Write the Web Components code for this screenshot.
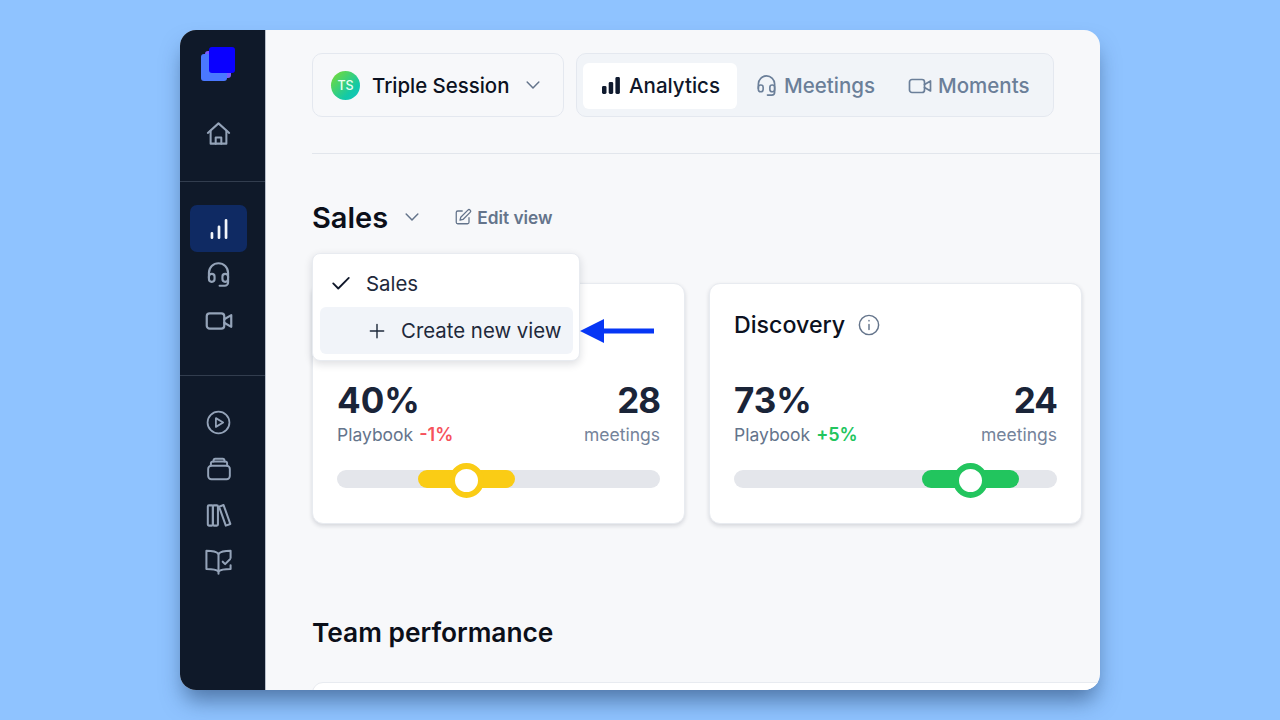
<!DOCTYPE html>
<html><head><meta charset="utf-8"><title>Analytics</title>
<style>
html,body{margin:0;padding:0;height:720px;overflow:hidden}
body{background:#8fc3ff;font-family:Inter,"Noto Sans",sans-serif;padding:30px 180px;box-sizing:border-box}
</style></head><body>
<app-window>
  <side-bar slot="side"></side-bar>
  <top-bar></top-bar>
  <view-header></view-header>
  <score-cards></score-cards>
  <team-section></team-section>
</app-window>
<script>
const I={
 home:'<path d="M2.500 11.500 12 3l9.500 8.500"/><path d="M5 9.500V21h14V9.500"/><path d="M9.500 21v-5.500h5V21"/>',
 bars:'<path d="M5.500 20v-4M12 20V10M18.500 20V4"/>',
 head:'<path d="M3.500 15v-4.500a8.500 8.500 0 0 1 17 0V15"/><rect x="3.500" y="11.500" width="5" height="7" rx="2.400"/><rect x="15.500" y="11.500" width="5" height="7" rx="2.400"/><path d="M20.500 16v3a3 3 0 0 1-3 3H13"/>',
 video:'<rect x="1.500" y="5.500" width="15" height="13" rx="2.500"/><path d="m16.500 10.500 6-3.500v10l-6-3.500"/>',
 play:'<circle cx="12" cy="12" r="10.500"/><path d="M9.500 7.800v8.400l7-4.200z"/>',
 box:'<rect x="2" y="9" width="20" height="12.500" rx="3"/><path d="M4.500 9V7a2 2 0 0 1 2-2h11a2 2 0 0 1 2 2v2"/><path d="M7 5V4A1.500 1.500 0 0 1 8.500 2.500h7A1.500 1.500 0 0 1 17 4v1"/>',
 lib:'<rect x="2.500" y="3" width="4.500" height="18" rx="1"/><rect x="7" y="3" width="4.500" height="18" rx="1"/><path d="m12.500 4.200 4-1.500 6 16.800-4 1.500z"/>',
 book:'<path d="M12 6.500C10.500 4.800 8 4 2 4v15c6 0 8.500.6 10 2 1.500-1.400 4-2 10-2v-3"/><path d="M12 6.500C13.500 4.800 16 4 22 4v6"/><path d="M12 6.500V23"/><path d="m15.500 13 2 2 4-4"/>',
 chev:'<path d="m5 8.500 7 7 7-7"/>',
 edit:'<path d="M11 4H5a2 2 0 0 0-2 2v13a2 2 0 0 0 2 2h13a2 2 0 0 0 2-2v-6"/><path d="M18.500 2.800a2.100 2.100 0 0 1 3 3L12 15.300l-4 1 1-4z"/>',
 check:'<path d="m3.500 12.500 5.500 5.500L20.500 6.500"/>',
 plus:'<path d="M12 4v16M4 12h16"/>',
 info:'<circle cx="12" cy="12" r="10.500"/><path d="M12 11.500v5.500M12 7.200v.3"/>'
};
const svg=(n,s,w=1.6,c='currentColor')=>`<svg width="${s}" height="${s}" viewBox="0 0 24 24" fill="none" stroke="${c}" stroke-width="${w}" stroke-linecap="round" stroke-linejoin="round" aria-hidden="true">${I[n]}</svg>`;
function def(tag,html,init){customElements.define(tag,class extends HTMLElement{
  connectedCallback(){ if(this.shadowRoot)return; const r=this.attachShadow({mode:'open'}); r.innerHTML=typeof html==='function'?html(this):html; init&&init(r,this);}
});}

def('app-window',`<style>
:host{display:flex;width:920px;height:660px;border-radius:16px;overflow:hidden;background:#f7f8fa;box-shadow:0 14px 22px -4px rgba(24,52,92,.55)}
main{flex:1;min-width:0;padding:23px 0 0 46px;box-sizing:border-box;display:flex;flex-direction:column}
</style><slot name="side"></slot><main><slot></slot></main>`);

def('side-bar',`<style>
:host{display:flex;flex-direction:column;flex:none;width:86px;box-sizing:border-box;background:#0f1929;border-right:1px solid #b9c0cb;padding-top:17px;color:#94a3b8}
.logo{position:relative;width:34px;height:34px;margin:0 0 30px 21px}
.logo i{position:absolute;display:block;border-radius:3px}
.a{left:0;top:7px;width:26px;height:27px;background:#4a78ff}
.b{left:4px;top:4px;width:26px;height:27px;background:#7a5cff}
.c{left:8px;top:0;width:26px;height:26px;background:#0a00ff}
.it{height:46px;display:flex;align-items:center;justify-content:center;margin:0 18px 0 10px;border-radius:7px}
.it.on{background:#0f2a63;color:#f2f5fa;height:47px;margin-bottom:-1px}
.hr{height:1px;background:#323d4e;flex:none}
.h1{margin:24px 0 23px}.h2{margin:32px 0 24px}
.up,.dn{display:flex;position:relative}.up{top:-1px}.dn{top:1px}
</style>
<div class="logo"><i class="b"></i><i class="a"></i><i class="c"></i></div>
<div class="it"><span class="up">${svg('home',27,1.8)}</span></div>
<div class="hr h1"></div>
<div class="it on">${svg('bars',26,2.5)}</div>
<div class="it">${svg('head',27,1.9)}</div>
<div class="it"><span class="dn">${svg('video',28,1.9)}</span></div>
<div class="hr h2"></div>
<div class="it"><span class="up">${svg('play',25,1.7)}</span></div>
<div class="it">${svg('box',26,1.8)}</div>
<div class="it">${svg('lib',27,1.8)}</div>
<div class="it"><span class="up">${svg('book',29,1.7)}</span></div>`);

def('top-bar',`<style>
:host{display:flex;gap:12px;padding-bottom:36px;border-bottom:1px solid #e2e6ec;margin-bottom:46px;color:#0f172a}
.sel,.tabs{height:64px;box-sizing:border-box;border:1px solid #e4e8ef;border-radius:10px;display:flex;align-items:center}
.sel{width:252px;padding-left:18px}
.av{width:29px;height:29px;border-radius:50%;background:linear-gradient(135deg,#7ddc2f,#12c9a8 70%,#14c4c0);color:#eafff2;font:500 12.500px Inter,sans-serif;display:flex;align-items:center;justify-content:center;flex:none}
.nm{font:500 20.400px Inter,sans-serif;margin-left:12px;color:#0b1120;white-space:nowrap}
.ch{margin-left:14px;color:#64748b;display:flex}
.tabs{width:478px;background:#f1f4f8;padding:1px 0 0 6px}
.tab{height:46px;display:flex;align-items:center;font:500 20.500px Inter,sans-serif;color:#6b7f99;white-space:nowrap}
.tab span{margin-left:6px}
.on{width:154px;background:#fff;border-radius:6px;color:#0f172a;justify-content:center;box-sizing:border-box}
.on span{margin-left:7px}
.t2{margin-left:18px}.t3{margin-left:33px}
</style>
<div class="sel"><div class="av">TS</div><div class="nm">Triple Session</div><div class="ch">${svg('chev',20,1.8)}</div></div>
<div class="tabs">
 <div class="tab on"><svg width="22" height="22" viewBox="0 0 22 22" fill="#0f1a2e" aria-hidden="true"><rect x="2" y="11" width="4.500" height="8" rx="1.400"/><rect x="8.700" y="7" width="4.500" height="12" rx="1.400"/><rect x="15.400" y="2" width="4.500" height="17" rx="1.400"/></svg><span>Analytics</span></div>
 <div class="tab t2">${svg('head',23,1.7)}<span>Meetings</span></div>
 <div class="tab t3">${svg('video',24,1.7)}<span>Moments</span></div>
</div>`);

def('view-header',`<style>
:host{display:flex;align-items:center;height:34px;position:relative;margin-bottom:49px}
h1{font:600 29px Inter,sans-serif;margin:0;color:#0b0f19}
.ch{display:flex;margin-left:14px;color:#64748b}
.ed{display:flex;align-items:center;gap:5px;margin-left:32px;font:600 17.300px Inter,sans-serif;color:#64748b}
.dd{position:absolute;z-index:3;left:0;top:53px;width:268px;height:108px;box-sizing:border-box;background:#fff;border:1px solid #e8ebf0;border-radius:8px;box-shadow:0 3px 8px rgba(15,23,42,.14);padding:6px 6px 0 7px;font:400 20.400px Inter,sans-serif;color:#1e293b}
.r{height:47px;display:flex;align-items:center;white-space:nowrap}
.r svg{flex:none}
.r1{padding-left:10px;height:46px;margin-bottom:1px}.r1 span{margin-left:14px}
.r2{background:#f1f4f9;border-radius:6px;padding-left:47px;width:253px;box-sizing:border-box}.r2 span{margin-left:14px}
.arr{position:absolute;z-index:3;left:268px;top:118px}
</style>
<h1>Sales</h1><div class="ch">${svg('chev',20,1.8)}</div>
<div class="ed">${svg('edit',18,1.7)}<span>Edit view</span></div>
<div class="dd">
 <div class="r r1">${svg('check',22,2,'#0f172a')}<span>Sales</span></div>
 <div class="r r2">${svg('plus',20,1.7,'#1e293b')}<span>Create new view</span></div>
</div>
<svg class="arr" width="76" height="26" viewBox="0 0 76 26" aria-hidden="true"><path d="M0 13 24 1v9.500h50v5H24V25z" fill="#0636f5"/></svg>`);

def('score-cards',`<style>
:host{display:flex;gap:24px}
</style><score-card pct="40%" delta="-1%" tone="#f6525c" num="28" bar="#facc15" from="25" width="30" dot="40.100"></score-card>
<score-card name="Discovery" pct="73%" delta="+5%" tone="#22c55e" num="24" bar="#22c55e" from="58.200" width="30" dot="73.100"></score-card>`);

def('score-card',h=>{const a=n=>h.getAttribute(n);return `<style>
:host{display:block;width:373px;height:241px;box-sizing:border-box;background:#fff;border:1px solid #e8ebf0;border-radius:11px;box-shadow:0 2px 4px rgba(15,23,42,.14);padding:24px 24px 0}
.t{display:flex;align-items:center;gap:13px;height:34px;font:500 23.200px Inter,sans-serif;color:#0b1120}
.t svg{color:#64748b}
.m{display:flex;justify-content:space-between;margin-top:37px;font:700 35px/42px Inter,sans-serif;color:#1a2438}
.n{letter-spacing:-1px}
.s{display:flex;justify-content:space-between;font:400 17.500px/26px Inter,sans-serif;color:#64748b;margin-top:1px}
.s b{font-weight:600;font-size:18px;color:${a('tone')};margin-left:1px}
.s .rt{color:#74839a}
.tr{position:relative;height:18px;background:#e4e6eb;border-radius:9px;margin-top:22px}
.f{position:absolute;top:0;height:18px;border-radius:9px;left:${a('from')}%;width:${a('width')}%;background:${a('bar')}}
.d{position:absolute;top:-7.500px;left:${a('dot')}%;margin-left:-17.500px;width:35px;height:35px;box-sizing:border-box;border-radius:50%;background:#fff;border:6px solid ${a('bar')}}
</style>
<div class="t">${h.hasAttribute('name')?`<span>${a('name')}</span>${svg('info',22,1.6)}`:''}</div>
<div class="m"><span>${a('pct')}</span><span class="n">${a('num')}</span></div>
<div class="s"><span>Playbook <b>${a('delta')}</b></span><span class="rt">meetings</span></div>
<div class="tr"><div class="f"></div><div class="d"></div></div>`});

def('team-section',`<style>
:host{display:block;margin-top:91px}
h2{font:600 26.300px/36px Inter,sans-serif;margin:0;color:#0b0f19}
.c{height:80px;margin-top:31px;background:#fff;border:1px solid #e8ebf0;border-radius:11px;box-sizing:border-box;margin-right:-20px}
</style><h2>Team performance</h2><div class="c"></div>`);
</script>
</body></html>
